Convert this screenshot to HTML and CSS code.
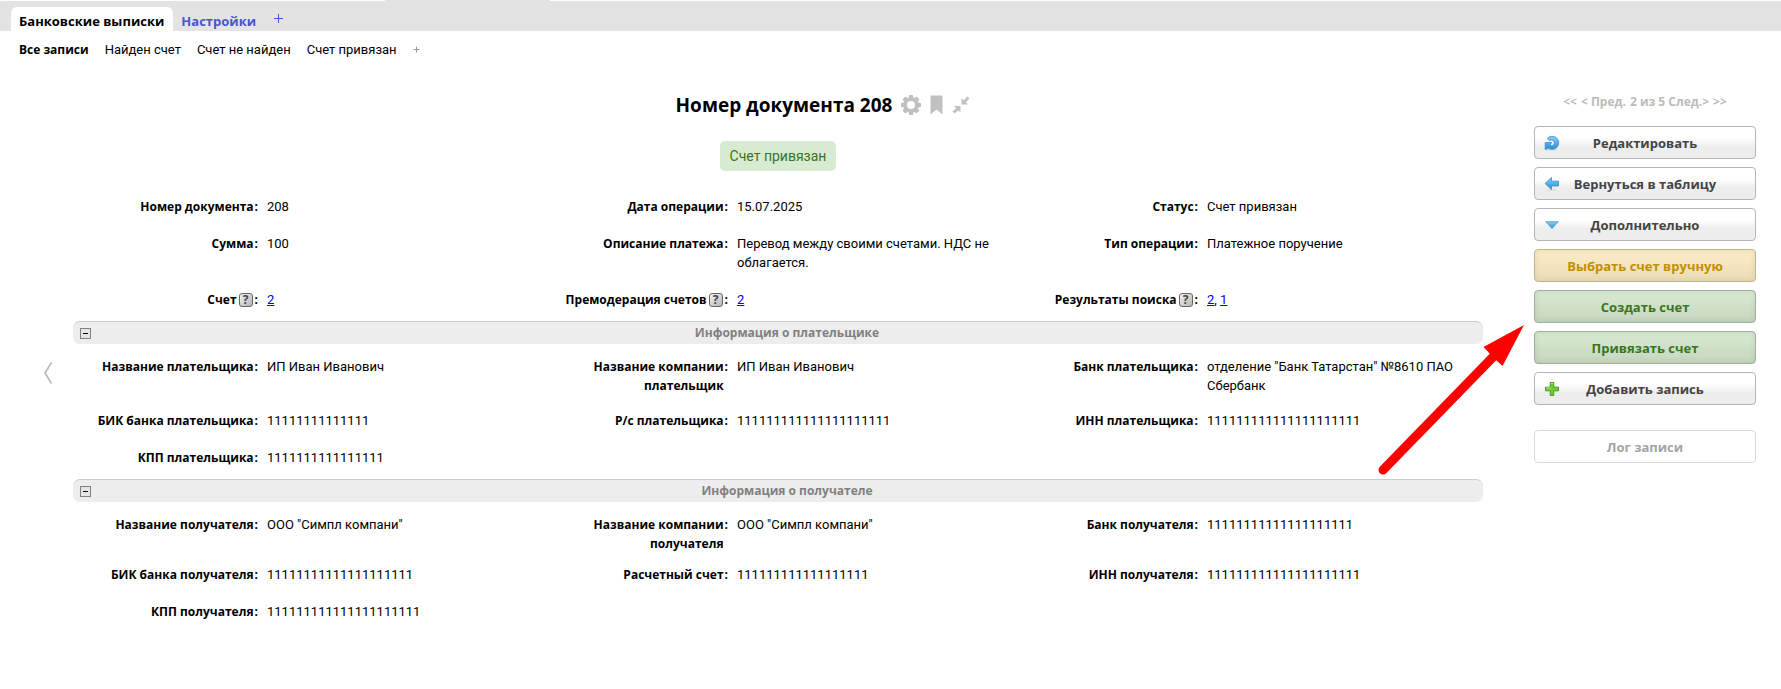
FILE: index.html
```html
<!DOCTYPE html>
<html lang="ru">
<head>
<meta charset="utf-8">
<meta name="viewport" content="width=device-width, initial-scale=1">
<title>Банковские выписки — Номер документа 208</title>
<link rel="stylesheet" href="styles.css">
</head>
<body>
<header class="tabs">
  <a class="tab tab-active" href="#">Банковские выписки</a>
  <a class="tab" href="#">Настройки</a>
  <button class="tab-add" type="button" aria-label="Добавить таблицу"><svg width="9" height="9" viewBox="0 0 9 9"><path d="M4.500 0v9M0 4.500h9" stroke="#4a55cf" stroke-width="1"/></svg></button>
</header>
<nav class="filters">
  <a class="filter filter-active" href="#">Все записи</a>
  <a class="filter" href="#">Найден счет</a>
  <a class="filter" href="#">Счет не найден</a>
  <a class="filter" href="#">Счет привязан</a>
  <button class="filter-add" type="button" aria-label="Добавить фильтр"><svg width="7" height="7" viewBox="0 0 7 7"><path d="M3.500 .500v6M.500 3.500h6" stroke="#999" stroke-width="1"/></svg></button>
</nav>

<div class="page">
  <div class="side-nav">
    <button class="prev-record" type="button" aria-label="Предыдущая запись"><svg width="10" height="24" viewBox="0 0 10 24"><path d="M8.500 1.500L2 12l6.500 10.500" fill="none" stroke="#bdbdbd" stroke-width="1.800"/></svg></button>
  </div>

  <main class="record">
    <div class="title-row">
      <h1 class="title">Номер документа 208</h1>
      <button class="icon-btn" type="button" aria-label="Настройки записи"><svg width="20" height="20" viewBox="0 0 20 20"><g fill="#c0c0c0"><g id="teeth"><rect x="7.800" y="0" width="4.400" height="20" rx="1"/><rect x="0" y="7.800" width="20" height="4.400" rx="1"/></g><use href="#teeth" transform="rotate(45 10 10)"/><circle cx="10" cy="10" r="7.800"/></g><circle cx="10" cy="10" r="4" fill="#fff"/></svg></button>
      <button class="icon-btn" type="button" aria-label="В закладки"><svg width="13" height="20" viewBox="0 0 13 20"><path d="M1.500 .500h10q1 0 1 1v18l-6-5-6 5v-18q0-1 1-1z" fill="#c0c0c0"/></svg></button>
      <button class="icon-btn" type="button" aria-label="Свернуть"><svg width="18" height="18" viewBox="0 0 18 18"><path d="M9.500 2v6.500H16l-2.200-2.200L17.500 2.600 15.400.500l-3.700 3.700zM8.500 16.500V10H2l2.200 2.200L.500 15.400l2.100 2.100 3.700-3.200z" fill="#c0c0c0"/></svg></button>
    </div>
    <div class="status"><span class="badge">Счет привязан</span></div>

    <dl class="fields">
      <div class="field"><dt>Номер документа</dt><dd>208</dd></div>
      <div class="field"><dt>Дата операции</dt><dd>15.07.2025</dd></div>
      <div class="field"><dt>Статус</dt><dd>Счет привязан</dd></div>

      <div class="field"><dt>Сумма</dt><dd>100</dd></div>
      <div class="field"><dt>Описание платежа</dt><dd>Перевод между своими счетами. НДС не облагается.</dd></div>
      <div class="field"><dt>Тип операции</dt><dd>Платежное поручение</dd></div>

      <div class="field"><dt>Счет<button class="help" type="button">?</button></dt><dd><a href="#">2</a></dd></div>
      <div class="field"><dt>Премодерация счетов<button class="help" type="button">?</button></dt><dd><a href="#">2</a></dd></div>
      <div class="field"><dt>Результаты поиска<button class="help" type="button">?</button></dt><dd><a href="#">2</a>, <a href="#">1</a></dd></div>
    </dl>

    <div class="section">
      <button class="toggle" type="button" aria-label="Свернуть раздел"></button>
      <h2>Информация о плательщике</h2>
    </div>
    <dl class="fields fields-section">
      <div class="field tight"><dt>Название плательщика</dt><dd>ИП Иван Иванович</dd></div>
      <div class="field tight"><dt>Название компании плательщик</dt><dd>ИП Иван Иванович</dd></div>
      <div class="field tight"><dt>Банк плательщика</dt><dd>отделение "Банк Татарстан" №8610 ПАО Сбербанк</dd></div>

      <div class="field"><dt>БИК банка плательщика</dt><dd>11111111111111</dd></div>
      <div class="field"><dt>Р/с плательщика</dt><dd>111111111111111111111</dd></div>
      <div class="field"><dt>ИНН плательщика</dt><dd>111111111111111111111</dd></div>

      <div class="field"><dt>КПП плательщика</dt><dd>1111111111111111</dd></div>
    </dl>

    <div class="section">
      <button class="toggle" type="button" aria-label="Свернуть раздел"></button>
      <h2>Информация о получателе</h2>
    </div>
    <dl class="fields fields-section">
      <div class="field tighter"><dt>Название получателя</dt><dd>ООО "Симпл компани"</dd></div>
      <div class="field tighter"><dt>Название компании получателя</dt><dd>ООО "Симпл компани"</dd></div>
      <div class="field tighter"><dt>Банк получателя</dt><dd>11111111111111111111</dd></div>

      <div class="field"><dt>БИК банка получателя</dt><dd>11111111111111111111</dd></div>
      <div class="field"><dt>Расчетный счет</dt><dd>111111111111111111</dd></div>
      <div class="field"><dt>ИНН получателя</dt><dd>111111111111111111111</dd></div>

      <div class="field"><dt>КПП получателя</dt><dd>111111111111111111111</dd></div>
    </dl>
  </main>

  <aside class="actions">
    <div class="pager">
      <a href="#">&lt;&lt;</a><a href="#">&lt; Пред.</a><span>2 из 5 <a href="#">След.&gt;</a></span><a href="#">&gt;&gt;</a>
    </div>
    <button class="btn" type="button"><svg class="btn-icon" width="16" height="16" viewBox="0 0 16 16"><defs><linearGradient id="blue" x1="0" y1="0" x2="0" y2="1"><stop offset="0" stop-color="#8fd0f5"/><stop offset="1" stop-color="#1c8fdc"/></linearGradient></defs><ellipse cx="8" cy="14.800" rx="6.500" ry="1" fill="#ddd"/><path d="M3.200 3.600A6.500 6.500 0 1 1 8 14.300Q6 14.300 4.600 13.300L1.200 14.500V7.500H7.700L5.900 10.200Q7 11 8.300 10.700A3 3 0 0 0 8 4.900Q6.500 4.900 5.600 5.800z" fill="url(#blue)" stroke="#3a8cc8" stroke-width=".8"/></svg>Редактировать</button>
    <button class="btn" type="button"><svg class="btn-icon" width="16" height="16" viewBox="0 0 16 16"><ellipse cx="8" cy="13.800" rx="5" ry="1" fill="#ddd"/><path d="M1 7.500L7.500 1.500V5.200H14.500V10H7.500V13.500z" fill="url(#blue)" stroke="#4a96cc" stroke-width=".9"/></svg>Вернуться в таблицу</button>
    <button class="btn" type="button"><svg class="btn-icon" width="16" height="16" viewBox="0 0 16 16"><path d="M1.800 4.800H14.200L8 11.500z" fill="url(#blue)" stroke="#4a96cc" stroke-width=".8"/></svg>Дополнительно</button>
    <button class="btn btn-yellow" type="button">Выбрать счет вручную</button>
    <button class="btn btn-green" type="button">Создать счет</button>
    <button class="btn btn-green" type="button">Привязать счет</button>
    <button class="btn" type="button"><svg class="btn-icon" width="16" height="16" viewBox="0 0 16 16"><path d="M6.200 1.500h3.600v4.700h4.700v3.600H9.800v4.700H6.200V9.800H1.500V6.200h4.700z" fill="#6fc92f" stroke="#4d9c2a" stroke-width="1"/><path d="M7 2.500h2M2.500 7H7" stroke="#b4e88c" stroke-width="1"/></svg>Добавить запись</button>
    <button class="btn btn-log" type="button">Лог записи</button>
    <svg class="pointer" width="147" height="151" viewBox="0 0 147 151" aria-hidden="true"><path d="M5 146L115 33" stroke="#f00" stroke-width="9" stroke-linecap="round"/><path d="M146 1L124.500 42 118 36 112 30 105.500 23z" fill="#f00"/></svg>
  </aside>
</div>
</body>
</html>
```
FILE: styles.css
```css
* {
  box-sizing: border-box;
}

body {
  margin: 0;
  min-height: 100vh;
  display: flex;
  flex-direction: column;
  background: #fff;
  color: #000;
  font: 13px/19px Roboto, "Noto Sans", sans-serif;
}

button {
  margin: 0;
  padding: 0;
  border: 0;
  background: none;
  color: inherit;
  font: inherit;
  cursor: pointer;
}

svg {
  display: block;
}

/* Table tabs */
.tabs {
  display: flex;
  align-items: flex-end;
  height: 31px;
  padding-left: 11px;
  background: linear-gradient(90deg, #fff 385px, transparent 385px 550px, #fff 550px) 0 0 / 100% 1px no-repeat #e3e3e3;
}

.tab {
  height: 24px;
  padding: 4px 9px 0 8px;
  color: #4a55cf;
  font: bold 13px/20px "Open Sans", sans-serif;
  text-decoration: none;
}

.tab-active {
  border-radius: 6px 6px 0 0;
  background: #fff;
  color: #000;
}

.tab-add {
  align-self: flex-start;
  margin: 14px 0 0 9px;
}

/* Saved filters */
.filters {
  display: flex;
  align-items: center;
  gap: 16px;
  padding: 9px 19px 1px;
}

.filter {
  color: #000;
  text-decoration: none;
}

.filter-active {
  font: bold 12px/19px "Open Sans", sans-serif;
}

/* Page columns */
.page {
  flex: 1;
  display: grid;
  grid-template-columns: 73px minmax(0, 1fr) 222px;
  padding: 0 25px 4px 0;
}

.side-nav {
  display: flex;
  align-items: center;
  padding-left: 43px;
}

.record {
  padding: 31px 51px 0 0;
}

.title-row {
  display: flex;
  align-items: center;
  justify-content: center;
  gap: 9px;
  padding-left: 90px;
}

.title {
  margin: 0;
  font: bold 19px/28px "Open Sans", sans-serif;
}

.status {
  display: flex;
  justify-content: center;
  margin: 22px 0 26px;
}

.badge {
  padding: 5px 10px;
  border-radius: 5px;
  background: #d9ead3;
  color: #38761d;
  font-size: 14px;
  line-height: 20px;
}

/* Field grid */
.fields {
  display: grid;
  grid-template-columns: repeat(3, minmax(0, 1fr));
  margin: 0;
  padding-bottom: 12px;
  row-gap: 18px;
}

.fields-section {
  padding-top: 13px;
}

.field {
  display: grid;
  grid-template-columns: 185px minmax(0, 1fr);
  column-gap: 9px;
  align-content: start;
}

.tight {
  margin-bottom: -2px;
}

.tighter {
  margin-bottom: -6px;
}

.field dt {
  display: grid;
  grid-template-columns: minmax(0, 1fr) auto;
  column-gap: 1px;
  font: bold 12px/19px "Open Sans", sans-serif;
  text-align: right;
}

.field dt::after {
  content: ":";
}

.field dt:has(.help) {
  grid-template-columns: minmax(0, 1fr) auto auto;
  column-gap: 2px;
}

.field dd {
  margin: 0;
  padding-right: 8px;
}

.field a {
  color: #00e;
}

.help {
  align-self: center;
  width: 14px;
  height: 14px;
  border: 1px solid #666;
  border-radius: 3px;
  background: linear-gradient(135deg, #f4f4f4, #b5b5b5);
  color: #444;
  font: bold 12px/12px "Open Sans", sans-serif;
}

/* Section bars */
.section {
  display: flex;
  align-items: center;
  height: 23px;
  padding-left: 7px;
  border-top: 1px solid #ccc;
  border-radius: 7px;
  background: #ededed;
}

.section h2 {
  flex: 1;
  margin: 0;
  color: #808080;
  font: bold 12px/20px "Open Sans", sans-serif;
  text-align: center;
}

.toggle {
  width: 11px;
  height: 11px;
  border: 1px solid #808080;
  background: linear-gradient(#000, #000) center / 5px 1px no-repeat #e4e4e4;
}

/* Record actions */
.actions {
  position: relative;
  display: flex;
  flex-direction: column;
  gap: 8px;
  padding-top: 32px;
}

.pager {
  display: flex;
  justify-content: center;
  gap: 4px;
  margin-bottom: 7px;
  color: #bbb;
  font: bold 12px/19px "Open Sans", sans-serif;
}

.pager a {
  color: inherit;
  text-decoration: none;
}

.btn {
  position: relative;
  height: 33px;
  border: 1px solid #b5b5b5;
  border-radius: 4px;
  background: linear-gradient(#fff 35%, #ededed 65%);
  color: #444;
  font: bold 13px/20px "Open Sans", sans-serif;
}

.btn-icon {
  position: absolute;
  top: 8px;
  left: 9px;
}

.btn-yellow {
  border-color: #bfb48f;
  background: linear-gradient(#fcedc8, #eadcb8);
  box-shadow: inset 0 0 6px rgba(120, 90, 0, 0.12);
  color: #bf9000;
}

.btn-green {
  border-color: #9fb09a;
  background: linear-gradient(#d9ead3, #c6d6c0);
  box-shadow: inset 0 0 6px rgba(30, 70, 20, 0.12);
  color: #38761d;
}

.btn-log {
  margin-top: 17px;
  border-color: #d9d9d9;
  background: #fff;
  color: #a3a3a3;
}

/* Arrow drawn over the form, pointing at the green buttons */
.pointer {
  position: absolute;
  top: 264px;
  right: 231px;
  pointer-events: none;
}
```
